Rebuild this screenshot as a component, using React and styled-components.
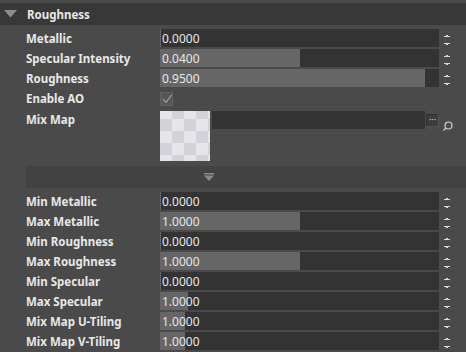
import React from "react";
import styled, { createGlobalStyle } from "styled-components";

const GlobalStyle = createGlobalStyle`
  html, body {
    margin: 0;
    padding: 0;
    background: #4a4a4a;
  }
`;

const topRows = [
  { label: "Metallic", value: "0.0000", fill: 1 },
  { label: "Specular Intensity", value: "0.0400", fill: 140 },
  { label: "Roughness", value: "0.9500", fill: 265 },
];

const bottomRows = [
  { label: "Min Metallic", value: "0.0000", fill: 1 },
  { label: "Max Metallic", value: "1.0000", fill: 140 },
  { label: "Min Roughness", value: "0.0000", fill: 1 },
  { label: "Max Roughness", value: "1.0000", fill: 140 },
  { label: "Min Specular", value: "0.0000", fill: 1 },
  { label: "Max Specular", value: "1.0000", fill: 28 },
  { label: "Mix Map U-Tiling", value: "1.0000", fill: 25 },
  { label: "Mix Map V-Tiling", value: "1.0000", fill: 25 },
];

const Spinner = () => (
  <SpinWrap>
    <svg width="8" height="16" viewBox="0 0 8 16">
      <path d="M3 5h2v1h2v1H1V6h2z" fill="#d8d8d8" />
      <path d="M1 13h6v1H5v1H3v-1H1z" fill="#d8d8d8" />
    </svg>
  </SpinWrap>
);

const NumberRow = ({ label, value, fill }) => (
  <Row>
    <Label>{label}</Label>
    <Field>
      <Fill style={{ width: fill }} />
      <Value>{value}</Value>
    </Field>
    <Spinner />
  </Row>
);

const App = () => {
  return (
    <Panel>
      <GlobalStyle />
      <Header>
        <svg width="13" height="8" viewBox="0 0 13 8">
          <path d="M0 0h13L6.5 7.5z" fill="#8c8c8c" />
        </svg>
        <Title>Roughness</Title>
      </Header>

      <Rows>
        {topRows.map((r) => (
          <NumberRow key={r.label} {...r} />
        ))}
        <Row>
          <Label>Enable AO</Label>
          <Check>
            <svg width="10" height="10" viewBox="0 0 10 10">
              <path d="M1 5l3 3.5L9.5 1" stroke="#bdbdbd" strokeWidth="1" fill="none" />
            </svg>
          </Check>
        </Row>
        <MapRow>
          <MapLabel>Mix Map</MapLabel>
          <Thumb />
          <PathField />
          <DotsButton>···</DotsButton>
          <SearchIcon>
            <svg width="11" height="11" viewBox="0 0 11 11">
              <circle cx="6.5" cy="4.5" r="3.5" stroke="#cfcfcf" strokeWidth="1.2" fill="none" />
              <path d="M4 7L1.5 9.5" stroke="#cfcfcf" strokeWidth="1.2" />
            </svg>
          </SearchIcon>
        </MapRow>
      </Rows>

      <Collapse>
        <svg width="10" height="8" viewBox="0 0 10 8">
          <rect x="0" y="0" width="10" height="1.5" fill="#8a8a8a" />
          <path d="M0 2.5h10L5 8z" fill="#8a8a8a" />
        </svg>
      </Collapse>

      <Rows $top={3}>
        {bottomRows.map((r) => (
          <NumberRow key={r.label} {...r} />
        ))}
      </Rows>
    </Panel>
  );
};

export default App;

const Panel = styled.div`
  width: 466px;
  height: 352px;
  overflow: hidden;
  background: #4a4a4a;
  padding-top: 3px;
  box-sizing: border-box;
  font-family: "Noto Sans", "Open Sans", sans-serif;
`;

const Header = styled.div`
  height: 22px;
  background: #383838;
  display: flex;
  align-items: center;
  padding-left: 4px;
  gap: 10px;
`;

const Title = styled.span`
  color: #e8e8e8;
  font-weight: 700;
  font-size: 11.5px;
`;

const Rows = styled.div`
  display: flex;
  flex-direction: column;
  padding-left: 26px;
  margin-top: ${(p) => p.$top ?? 3}px;
`;

const Row = styled.div`
  height: 20px;
  display: grid;
  grid-template-columns: 134px 279px 27px;
  align-items: center;
`;

const Label = styled.span`
  color: #e8e8e8;
  font-weight: 700;
  font-size: 11.5px;
  white-space: nowrap;
`;

const Field = styled.div`
  position: relative;
  height: 18px;
  background: #333333;
  display: flex;
  align-items: center;
`;

const Fill = styled.div`
  position: absolute;
  left: 0;
  top: 0;
  bottom: 0;
  background: #666666;
`;

const Value = styled.span`
  position: relative;
  padding-left: 2px;
  color: #e8e8e8;
  font-size: 12px;
`;

const SpinWrap = styled.div`
  display: flex;
  justify-content: flex-start;
  padding-left: 4px;
  align-items: center;
`;

const Check = styled.div`
  width: 11px;
  height: 12px;
  background: #575757;
  border: 1px solid #626262;
  box-sizing: content-box;
  display: flex;
  align-items: center;
  justify-content: center;
  margin-top: 1px;
`;

const MapRow = styled.div`
  height: 58px;
  display: grid;
  grid-template-columns: 134px 52px 213px 14px 27px;
  align-items: start;
  padding-top: 3px;
  box-sizing: border-box;
`;

const MapLabel = styled(Label)`
  line-height: 18px;
`;

const Thumb = styled.div`
  width: 50px;
  height: 50px;
  background-color: #e6e6ea;
  background-image: conic-gradient(
    #d2d2d8 0 25%,
    transparent 0 50%,
    #d2d2d8 0 75%,
    transparent 0
  );
  background-size: 24px 24px;
  background-position: 0 -4px;
`;

const PathField = styled.div`
  height: 18px;
  background: #333333;
`;

const DotsButton = styled.div`
  margin-top: 3px;
  width: 11px;
  height: 11px;
  background: #3c3c3c;
  border: 1px solid #2e2e2e;
  border-right-color: #555;
  border-bottom-color: #555;
  color: #d0d0d0;
  font-size: 9px;
  line-height: 9px;
  text-align: center;
  overflow: hidden;
  margin-left: 1px;
`;

const SearchIcon = styled.div`
  padding-left: 3px;
  padding-top: 4px;
`;

const Collapse = styled.div`
  margin-left: 26px;
  height: 22px;
  background: #424242;
  display: flex;
  justify-content: center;
  align-items: center;
  padding-right: 75px;
`;
